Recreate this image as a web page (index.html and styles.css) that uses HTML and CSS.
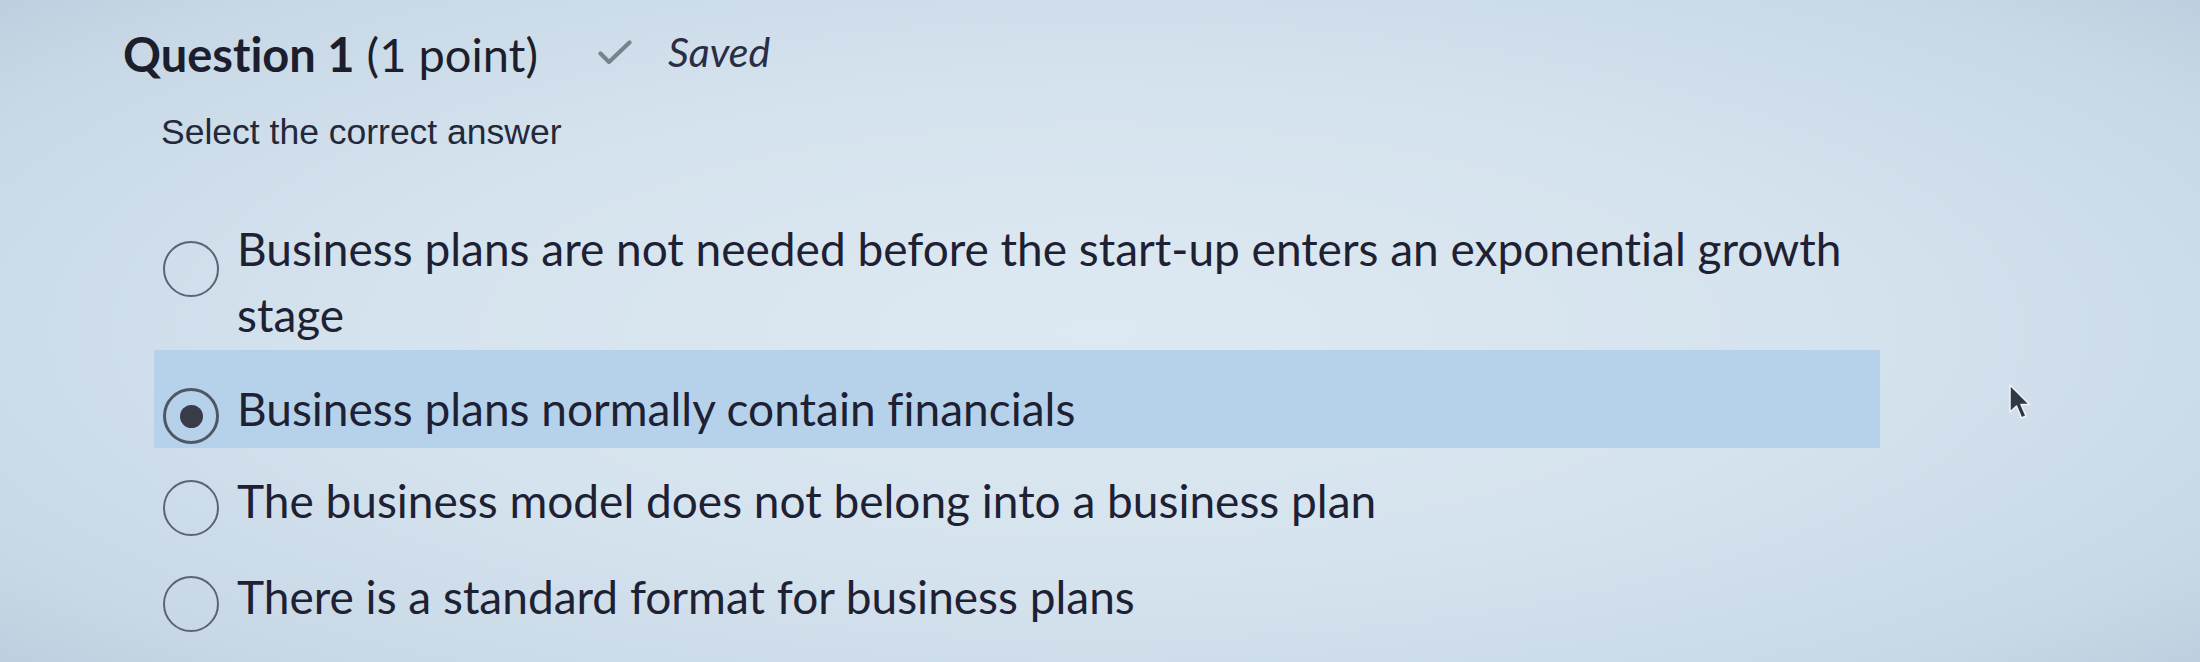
FILE: index.html
```html
<!DOCTYPE html>
<html lang="en">
<head>
<meta charset="utf-8">
<title>Question 1</title>
<link rel="stylesheet" href="styles.css">
</head>
<body>
<main class="page">
  <header class="q-header">
    <h1 class="q-title"><strong>Question 1</strong> (1 point)</h1>
    <svg class="check" viewBox="0 0 34 25" width="34" height="25" aria-hidden="true">
      <polyline points="2.5,13.5 11,22 31.5,2.5" fill="none" stroke="#76838f" stroke-width="4.2" stroke-linecap="round" stroke-linejoin="round"/>
    </svg>
    <span class="saved">Saved</span>
  </header>
  <p class="prompt">Select the correct answer</p>
  <ul class="options">
    <li class="option first">
      <span class="radio"></span>
      <span class="label">Business plans are not needed before the start-up enters an exponential growth stage</span>
    </li>
    <li class="option selected">
      <span class="radio"><span class="dot"></span></span>
      <span class="label">Business plans normally contain financials</span>
    </li>
    <li class="option">
      <span class="radio"></span>
      <span class="label">The business model does not belong into a business plan</span>
    </li>
    <li class="option">
      <span class="radio"></span>
      <span class="label">There is a standard format for business plans</span>
    </li>
  </ul>
  <svg class="cursor" viewBox="0 0 24 38" width="24" height="38" aria-hidden="true">
    <path d="M2 1 L2 28 L8.5 22 L13.5 34 L18 32 L13 20.5 L21.5 20.5 Z" fill="#2f3846" stroke="#eef3f6" stroke-width="1.5" stroke-linejoin="round"/>
  </svg>
</main>
</body>
</html>
```
FILE: styles.css
```css
html, body {
  margin: 0;
  padding: 0;
}
body {
  width: 2200px;
  height: 662px;
  overflow: hidden;
  background:
    radial-gradient(ellipse 72% 80% at 50% 50%, #dde9f2 0%, #d5e3ee 45%, #c8d8e6 80%, #b9cadb 100%);
  color: #1e2134;
  font-family: Lato, "Open Sans", sans-serif;
  font-variant-ligatures: none;
  font-feature-settings: "liga" 0, "clig" 0;
}
.page {
  position: relative;
  height: 662px;
}
.q-header {
  display: flex;
  align-items: flex-start;
  padding: 31px 0 0 123px;
  margin: 0;
}
.q-title {
  margin: 0;
  font-size: 47px;
  line-height: 47px;
  font-weight: 400;
  color: #1c1e2d;
}
.q-title strong {
  font-weight: 700;
}
.check {
  margin: 9px 0 0 60px;
  flex: none;
}
.saved {
  margin: 1px 0 0 36px;
  font-style: italic;
  font-size: 41px;
  line-height: 40px;
  color: #2a2d44;
}
.prompt {
  margin: 34px 0 0 161px;
  font-family: "Liberation Sans", Arial, sans-serif;
  font-size: 35.5px;
  line-height: 40px;
  color: #23283a;
}
.options {
  list-style: none;
  margin: 44px 0 0 154px;
  padding: 0;
  width: 1726px;
}
.option {
  display: flex;
  align-items: flex-start;
  padding: 20px 0 8px 9px;
}
.option.first {
  padding-bottom: 2px;
}
.option.selected {
  background: #b6d2ea;
  padding-top: 26px;
  padding-bottom: 4px;
}
.radio {
  box-sizing: border-box;
  flex: none;
  width: 56px;
  height: 56px;
  margin-top: 12px;
  border: 2.5px solid #5c6473;
  border-radius: 50%;
  display: flex;
  align-items: center;
  justify-content: center;
}
.first .radio {
  margin-top: 25px;
}
.selected .radio {
  border: 3px solid #4f5765;
}
.dot {
  width: 23px;
  height: 23px;
  border-radius: 50%;
  background: #373c48;
}
.label {
  margin-left: 18px;
  font-size: 46px;
  line-height: 66px;
  color: #1e2134;
  max-width: 1640px;
}
.cursor {
  position: absolute;
  left: 2008px;
  top: 384px;
}
```
